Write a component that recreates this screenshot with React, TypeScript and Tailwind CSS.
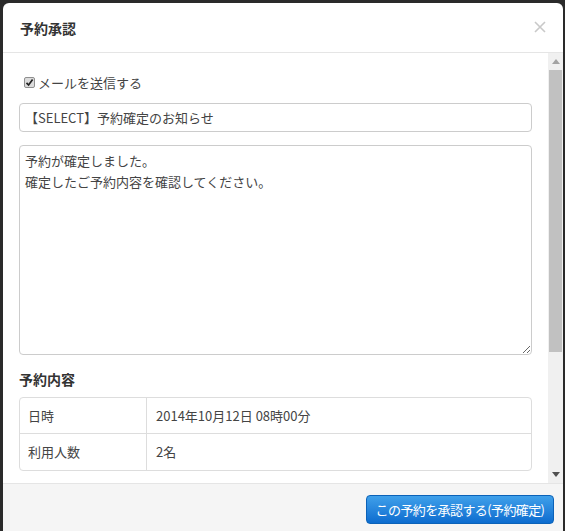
export default function App() {
  return (
    <div
      className="h-[531px] w-[565px] overflow-hidden bg-[#2a2a2a] pl-[3px] pr-[2px] pt-[3px] text-[#333]"
      style={{ fontFamily: '"Noto Sans CJK JP", "Noto Sans", sans-serif' }}
    >
      <div className="flex h-[600px] flex-col rounded-t-[6px] bg-white">
        {/* header */}
        <div className="flex h-[50px] shrink-0 items-center justify-between border-b border-[#e5e5e5] pl-[17px] pr-[17px]">
          <h1 className="text-[14px] font-bold leading-none">予約承認</h1>
          <svg width="12" height="12" viewBox="0 0 12 12" className="mt-[-2px]">
            <path d="M1 1L11 11M11 1L1 11" stroke="#c9c9c9" strokeWidth="1.6" />
          </svg>
        </div>

        {/* body */}
        <div className="flex h-[430px] shrink-0">
          <div className="flex-1 overflow-hidden px-4 pt-5">
            <label className="flex h-[19px] items-center gap-[3px] pl-[5px] text-[13px] text-[#444]">
              <span className="flex h-[11px] w-[11px] items-center justify-center rounded-[2px] border border-[#8f8f8f] bg-[#dcdcdc]">
                <svg width="9" height="9" viewBox="0 0 9 9">
                  <path d="M1.5 4.8L3.6 7L7.6 1.6" fill="none" stroke="#222" strokeWidth="1.7" />
                </svg>
              </span>
              メールを送信する
            </label>

            <input
              defaultValue="【SELECT】予約確定のお知らせ"
              className="mt-[11px] block h-[29px] w-full rounded-[4px] border border-[#ccc] pl-[5px] text-[13px] text-[#444] outline-none"
              style={{ fontFamily: '"Noto Sans CJK JP", sans-serif' }}
            />

            <textarea
              defaultValue={'予約が確定しました。\n確定したご予約内容を確認してください。'}
              className="mt-[13px] block h-[210px] w-full rounded-[4px] border border-[#ccc] px-[5px] pt-[4px] text-[13px] leading-[21px] text-[#444] outline-none"
              style={{ fontFamily: '"Noto Sans CJK JP", sans-serif' }}
            />

            <h2 className="mt-[15px] text-[14px] font-bold leading-[18px]">予約内容</h2>

            <div className="mt-[9px] overflow-hidden rounded-[4px] border border-[#ddd] text-[13px] text-[#444]">
              <div className="flex h-[36px] items-center border-b border-[#ddd]">
                <div className="flex h-full w-[127px] items-center border-r border-[#ddd] pl-2">日時</div>
                <div className="pl-[9px]">2014年10月12日 08時00分</div>
              </div>
              <div className="flex h-[36px] items-center">
                <div className="flex h-full w-[127px] items-center border-r border-[#ddd] pl-2">利用人数</div>
                <div className="pl-[9px]">2名</div>
              </div>
            </div>
          </div>

          {/* scrollbar */}
          <div className="flex w-[15px] flex-col items-center bg-[#f0f0f0]">
            <div className="flex h-[17px] items-center justify-center">
              <svg width="8" height="5" viewBox="0 0 8 5">
                <path d="M0 5L4 0L8 5Z" fill="#a3a3a3" />
              </svg>
            </div>
            <div className="h-[282px] w-[13px] bg-[#c1c1c1]" />
            <div className="flex-1" />
            <div className="flex h-[17px] items-center justify-center">
              <svg width="8" height="5" viewBox="0 0 8 5">
                <path d="M0 0L8 0L4 5Z" fill="#505050" />
              </svg>
            </div>
          </div>
        </div>

        {/* footer */}
        <div className="flex flex-1 justify-end border-t border-[#e5e5e5] bg-[#f5f5f5] pr-[9px] pt-[11px]">
          <button className="h-[29px] w-[188px] rounded-[4px] border border-[#0b62b8] bg-gradient-to-b from-[#3fa0ea] to-[#0b6ccf] text-[13px] tracking-[-0.6px] text-white">
            この予約を承認する(予約確定)
          </button>
        </div>
      </div>
    </div>
  )
}
